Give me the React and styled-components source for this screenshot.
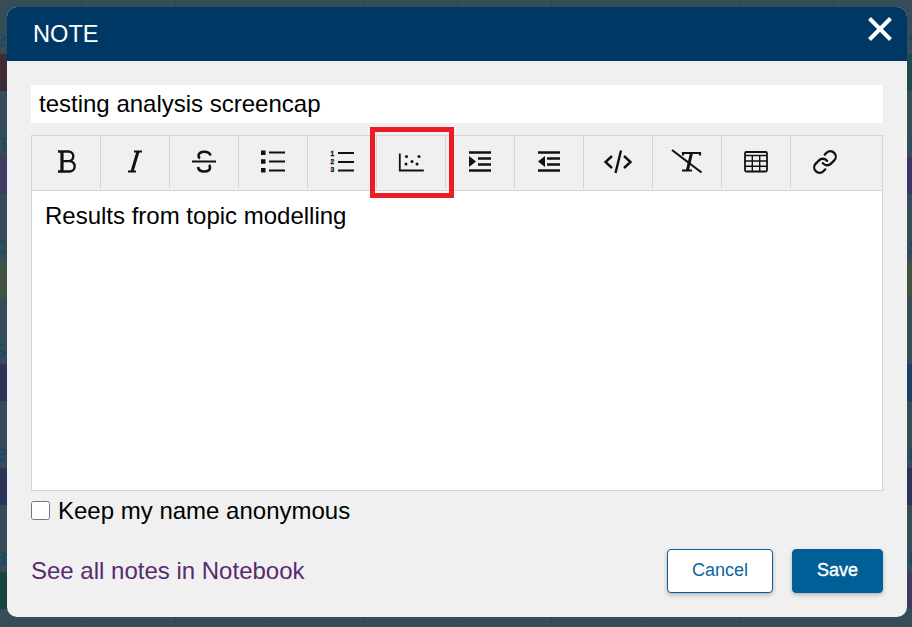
import React from 'react'
import styled, { createGlobalStyle } from 'styled-components'
import { Link } from 'lucide-react'

const GlobalStyle = createGlobalStyle`
  html, body {
    margin: 0;
    padding: 0;
    width: 100%;
    height: 100%;
    overflow: hidden;
    font-family: "Liberation Sans", Arial, sans-serif;
  }
`

const Page = styled.div`
  position: relative;
  width: 912px;
  height: 627px;
  overflow: hidden;
  background: #364c59;
`

const Board = styled.div`
  display: grid;
  grid-template-columns: 82px repeat(8, 94px) 78px;
  grid-template-rows: repeat(6, 103.6px);
  height: 100%;
`

const BoardCell = styled.div`
  display: flex;
  flex-direction: column;
  justify-content: flex-end;
  overflow: hidden;
  padding-bottom: 13px;
  border-right: 1px solid #2f4553;
  box-sizing: border-box;
  &:nth-child(10n) { border-right: none; }
`

const BoardLabel = styled.div`
  height: 30px;
  margin-left: ${p => p.$indent}px;
  font-size: 23px;
  line-height: 30px;
  white-space: nowrap;
  color: #164a6b;
`

const BoardBar = styled.div`
  height: 37px;
  background: ${p => p.$color};
`

const Modal = styled.div`
  position: absolute;
  left: 7px;
  top: 7px;
  width: 900px;
  height: 610px;
  display: flex;
  flex-direction: column;
  background: #f0f0f0;
  border-radius: 10px;
  overflow: hidden;
`

const Header = styled.div`
  flex: none;
  height: 54px;
  display: flex;
  align-items: center;
  justify-content: space-between;
  padding: 0 15px 0 26px;
  background: #003865;
`

const Title = styled.h2`
  margin: 0;
  font-size: 23.6px;
  font-weight: 400;
  color: #fff;
`

const CloseButton = styled.button`
  display: flex;
  width: 24px;
  height: 24px;
  padding: 0;
  margin-top: -11px;
  border: none;
  background: none;
  color: #fff;
`

const Body = styled.div`
  flex: 1;
  display: flex;
  flex-direction: column;
  padding: 24px;
`

const NameInput = styled.input`
  flex: none;
  height: 38px;
  box-sizing: border-box;
  padding: 0 8px;
  border: none;
  outline: none;
  background: #fff;
  font-family: inherit;
  font-size: 24px;
  color: #000;
`

const Editor = styled.div`
  margin-top: 12px;
  border: 1px solid #d4d4d4;
`

const Toolbar = styled.div`
  display: flex;
  height: 55px;
  box-sizing: border-box;
  padding-bottom: 2px;
  border-bottom: 1px solid #d4d4d4;
  background: #f0f0f0;
`

const ToolButton = styled.div`
  position: relative;
  flex: none;
  width: 69px;
  display: flex;
  align-items: center;
  justify-content: center;
  box-sizing: border-box;
  border-right: 1px solid ${p => (p.$last ? 'transparent' : '#d4d4d4')};
  color: #111;
`

const Callout = styled.div`
  position: absolute;
  left: -7px;
  right: -9px;
  top: -9px;
  bottom: -10px;
  border: 5px solid #ed1c24;
  pointer-events: none;
`

const Content = styled.div`
  height: 299px;
  box-sizing: border-box;
  padding: 11px 13px;
  background: #fff;
  font-size: 24px;
  line-height: 28px;
  color: #000;
`

const AnonRow = styled.label`
  display: flex;
  align-items: center;
  gap: 8px;
  height: 40px;
  font-size: 24px;
  color: #000;
`

const AnonCheck = styled.input`
  width: 19px;
  height: 19px;
  margin: 0 0 2px;
`

const Footer = styled.div`
  margin-top: auto;
  display: flex;
  align-items: center;
`

const NotebookLink = styled.a`
  margin-right: auto;
  font-size: 24px;
  color: #592a6f;
  text-decoration: none;
`

const Action = styled.button`
  height: 44px;
  width: ${p => p.$width}px;
  margin-left: ${p => p.$gap}px;
  padding: 0 0 1px;
  box-sizing: border-box;
  border: 1px solid #00609a;
  border-radius: 4px;
  background: ${p => (p.$primary ? '#005f96' : '#fff')};
  box-shadow: 0 2px 4px rgba(0, 0, 0, 0.25);
  font-family: inherit;
  font-size: 18px;
  font-weight: 400;
  -webkit-text-stroke: ${p => (p.$primary ? '0.4px #fff' : '0')};
  color: ${p => (p.$primary ? '#fff' : '#0f639e')};
`

const Icon = ({ children, fill = 'none' }) => (
  <svg width="24" height="24" viewBox="0 0 24 24" fill={fill} stroke="currentColor" strokeWidth="2" style={{ overflow: 'visible' }}>
    {children}
  </svg>
)

const icons = [
  <Icon key="bold">
    <path d="M8 1.500v20" strokeWidth="3.200" />
    <path d="M4 1.500h10.500a4.800 4.800 0 0 1 0 9.600H8M8 11.100h7.500a5 5 0 0 1 0 10.400H4" strokeWidth="2.400" />
  </Icon>,
  <Icon key="italic">
    <path d="M11 1.500h8M5 21.500h8" strokeWidth="1.800" />
    <path d="M15 1.500 9 21.500" strokeWidth="3" />
  </Icon>,
  <Icon key="strike">
    <path d="M0 11.500h24" />
    <path d="M18.500 5.500C18 3 15 1.800 12 1.800 9 1.800 6.500 3.300 6.500 5.800c0 1 .5 2 1.500 2.600" strokeWidth="2.600" />
    <path d="M6 17c.5 3 3 4.500 6 4.500 3.500 0 6-1.500 6-4 0-1-.5-2-1-2.500" strokeWidth="2.600" />
  </Icon>,
  <Icon key="bullets">
    <path d="M8 2.500h16M8 11.500h16M8 20.500h16" strokeWidth="2.200" />
    <path d="M0 .5h4.500v4.500H0zM0 9.200h4.500v4.500H0zM0 18h4.500v4.500H0z" fill="currentColor" stroke="none" />
  </Icon>,
  <Icon key="numbers">
    <path d="M8 3h16M8 12h16M8 20.500h16" strokeWidth="2.200" />
    <g fill="currentColor" stroke="currentColor" strokeWidth="0.3" fontSize="6.500" fontWeight="700" fontFamily="Liberation Sans, sans-serif">
      <text x="0.500" y="6">1</text>
      <text x="0.500" y="14">2</text>
      <text x="0.500" y="22">3</text>
    </g>
  </Icon>,
  <Icon key="scatter">
    <path d="M.8 3.500v17h24" strokeWidth="1.800" />
    <g fill="currentColor" stroke="none">
      <circle cx="7.500" cy="6.500" r="1.500" />
      <circle cx="20" cy="6.500" r="1.500" />
      <circle cx="13" cy="11.500" r="1.500" />
      <circle cx="7" cy="14" r="1.500" />
      <circle cx="18" cy="14" r="1.500" />
    </g>
  </Icon>,
  <Icon key="indent">
    <path d="M1 2.500h22M10 8.500h13M10 14.500h13M1 20.500h22" strokeWidth="2.400" />
    <path d="M1 6 8 11.500 1 17z" fill="currentColor" stroke="none" />
  </Icon>,
  <Icon key="outdent">
    <path d="M1 2.500h22M10 8.500h13M10 14.500h13M1 20.500h22" strokeWidth="2.400" />
    <path d="M8 6 1 11.500 8 17z" fill="currentColor" stroke="none" />
  </Icon>,
  <Icon key="code">
    <path d="M6 6-.5 12 6 18M18 6l6.500 6L18 18M15 .5 9.500 23" strokeWidth="2.400" />
  </Icon>,
  <Icon key="clear">
    <path d="M-3 0 26.500 22.500" strokeWidth="2.200" />
    <path d="M8 5.500V3h17v2.500" strokeWidth="2.200" />
    <path d="M16.500 3l-4 17" strokeWidth="3" />
    <path d="M7 20.500h10" strokeWidth="2.200" />
  </Icon>,
  <Icon key="table">
    <rect x="1" y="2" width="22" height="19.500" rx="1.500" strokeWidth="1.800" />
    <path d="M1 5.500h22M1 11h22M1 16.200h22M8.300 6v15M15.700 6v15" strokeWidth="1.400" />
  </Icon>,
  <Link key="link" size={26} strokeWidth={2.1} />,
]

const leftEdge = [
  ['e', '#3e2b36'],
  ['m', '#3f3c63'],
  ['c', '#3f5244'],
  ['s', '#2b3358'],
  ['e', '#2b3358'],
  ['a', '#154444'],
]

const rightEdge = [
  ['s', '#1c4a4e'],
  [':', '#3f3269'],
  ['s', '#3f5244'],
  ['', '#1a4166'],
  ['o', '#2b3358'],
  ['n', '#3d3a60'],
]

const App = () => {
  const cells = []
  for (let row = 0; row < 6; row++) {
    for (let col = 0; col < 10; col++) {
      const edge = col === 0 ? leftEdge[row] : col === 9 ? rightEdge[row] : null
      cells.push(
        <BoardCell key={`${row}-${col}`}>
          {edge && <BoardLabel $indent={col === 0 ? -6 : 74}>{edge[0]}</BoardLabel>}
          {edge && <BoardBar $color={edge[1]} />}
        </BoardCell>
      )
    }
  }

  return (
    <Page>
      <GlobalStyle />
      <Board>{cells}</Board>
      <Modal>
        <Header>
          <Title>NOTE</Title>
          <CloseButton aria-label="Close">
            <svg width="24" height="24" viewBox="0 0 24 24" stroke="currentColor" strokeWidth="4">
              <path d="M1.500 1.500 22.500 22.500M22.500 1.500 1.500 22.500" />
            </svg>
          </CloseButton>
        </Header>
        <Body>
          <NameInput readOnly value="testing analysis screencap" />
          <Editor>
            <Toolbar>
              {icons.map((icon, i) => (
                <ToolButton key={i} $last={i === icons.length - 1}>
                  {icon}
                  {i === 5 && <Callout />}
                </ToolButton>
              ))}
            </Toolbar>
            <Content>Results from topic modelling</Content>
          </Editor>
          <AnonRow>
            <AnonCheck type="checkbox" />
            Keep my name anonymous
          </AnonRow>
          <Footer>
            <NotebookLink href="#">See all notes in Notebook</NotebookLink>
            <Action $width={106}>Cancel</Action>
            <Action $width={91} $gap={19} $primary>Save</Action>
          </Footer>
        </Body>
      </Modal>
    </Page>
  )
}

export default App
